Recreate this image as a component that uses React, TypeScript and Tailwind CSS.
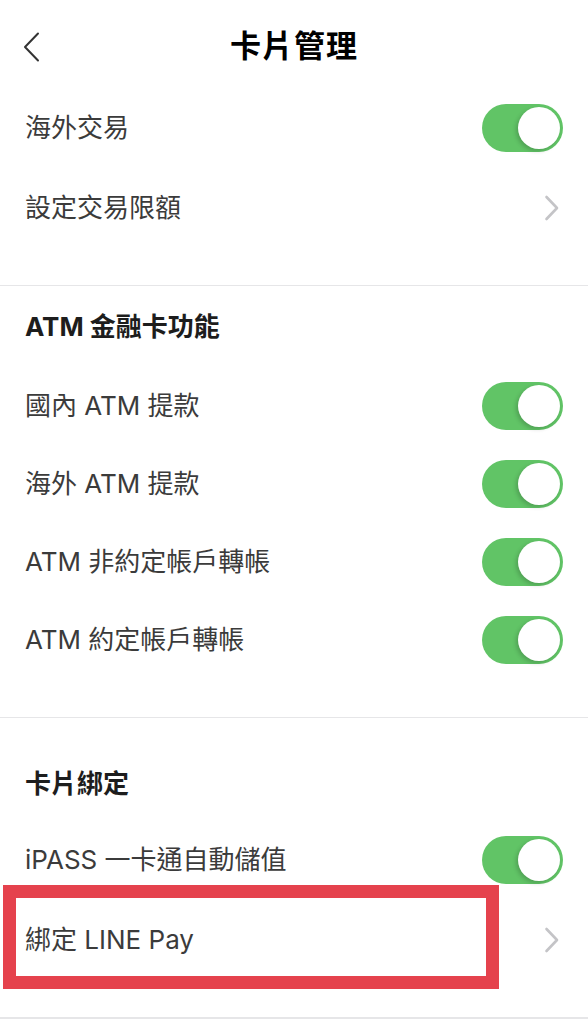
type Row = { label: string; kind: "toggle" | "link" };

const Toggle = () => {
  return (
    <div className="relative h-[48px] w-[81px] rounded-full bg-[#61c466]">
      <div className="absolute right-[3px] top-[3px] h-[42px] w-[42px] rounded-full bg-white shadow-[-2px_2px_4px_rgba(0,0,0,0.18)]" />
    </div>
  );
};

const Chevron = () => {
  return (
    <svg width="16" height="26" viewBox="0 0 16 26" fill="none" className="mr-[3px]">
      <path d="M2.5 2 L13 13 L2.5 24" stroke="#c4c4c7" strokeWidth="2.6" strokeLinecap="round" strokeLinejoin="round" />
    </svg>
  );
};

const BackIcon = () => {
  return (
    <svg width="18" height="30" viewBox="0 0 18 30" fill="none" className="absolute left-[23px] top-[32px]">
      <path d="M15 1.5 L2 15 L15 28.5" stroke="#333" strokeWidth="2" strokeLinecap="round" strokeLinejoin="round" />
    </svg>
  );
};

const SettingRow = ({ row, height = 80 }: { row: Row; height?: number }) => {
  return (
    <div
      className={`flex items-center justify-between pl-[25px] pr-[25px] ${height === 78 ? "h-[78px]" : "h-[80px]"}`}
    >
      <span className="text-[26px] leading-none text-[#3b3b3b]">{row.label}</span>
      {row.kind === "toggle" ? <Toggle /> : <Chevron />}
    </div>
  );
};

const App = () => {
  return (
    <div
      className="h-[1024px] w-[588px] overflow-hidden bg-white"
      style={{ fontFamily: 'Inter, "Noto Sans CJK TC", sans-serif' }}
    >
      {/* Header */}
      <div className="relative flex h-[88px] items-center justify-center">
        <BackIcon />
        <h1 className="mt-[2px] text-[31px] font-bold leading-none tracking-[1px] text-black">卡片管理</h1>
      </div>

      {/* Overseas */}
      <div className="pb-[37px]">
        <SettingRow row={{ label: "海外交易", kind: "toggle" }} />
        <SettingRow row={{ label: "設定交易限額", kind: "link" }} />
      </div>

      {/* ATM */}
      <div className="border-t border-[#e6e6e8] pb-[38px]">
        <div className="px-[25px] py-[25px]">
          <h2 className="text-[26px] font-bold leading-[31px] text-[#1d1d1d]">ATM 金融卡功能</h2>
        </div>
        <SettingRow height={78} row={{ label: "國內 ATM 提款", kind: "toggle" }} />
        <SettingRow height={78} row={{ label: "海外 ATM 提款", kind: "toggle" }} />
        <SettingRow height={78} row={{ label: "ATM 非約定帳戶轉帳", kind: "toggle" }} />
        <SettingRow height={78} row={{ label: "ATM 約定帳戶轉帳", kind: "toggle" }} />
      </div>

      {/* Card binding */}
      <div className="border-t border-[#e6e6e8] pb-[37px]">
        <div className="px-[25px] pb-[21px] pt-[50px]">
          <h2 className="text-[26px] font-bold leading-[31px] text-[#1d1d1d]">卡片綁定</h2>
        </div>
        <SettingRow row={{ label: "iPASS 一卡通自動儲值", kind: "toggle" }} />
        <div className="relative">
          <SettingRow row={{ label: "綁定 LINE Pay", kind: "link" }} />
          {/* highlight annotation */}
          <div className="pointer-events-none absolute left-[3px] top-[-15px] h-[104px] w-[496px] border-[13px] border-[#e5424d]" />
        </div>
      </div>
      <div className="border-t-2 border-[#e6e6e8]" />
    </div>
  );
};

export default App;
